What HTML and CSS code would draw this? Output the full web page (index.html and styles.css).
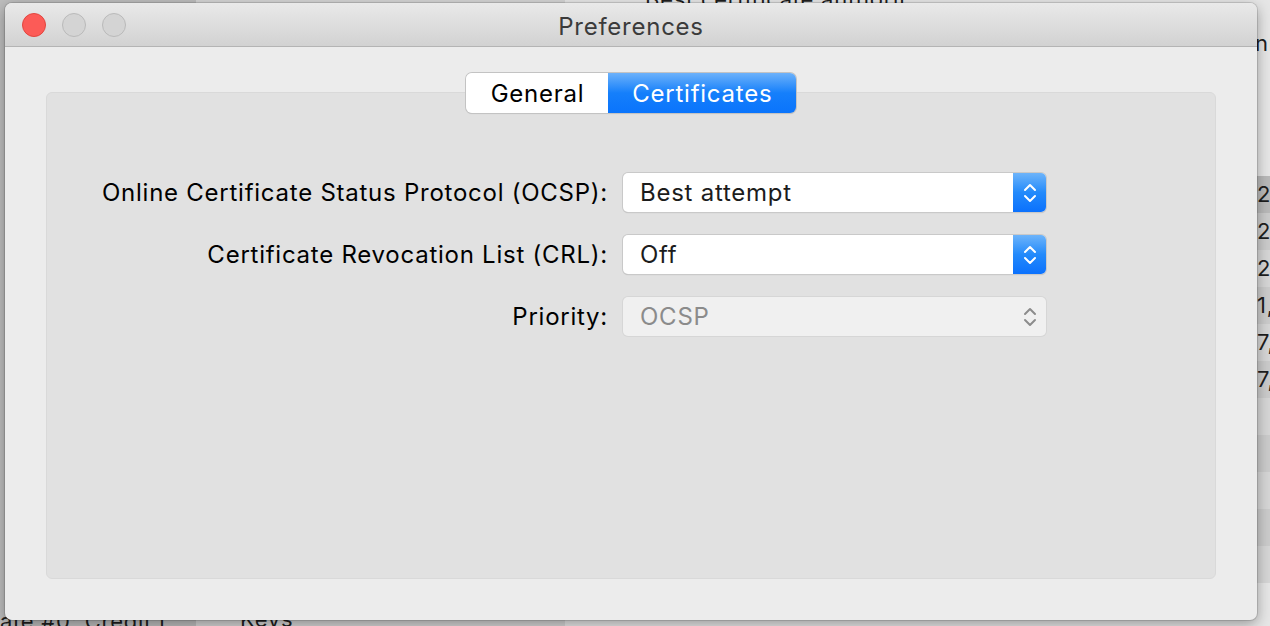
FILE: index.html
```html
<!DOCTYPE html>
<html lang="en">
<head>
    <meta charset="UTF-8">
    <title>Preferences</title>
    <link rel="stylesheet" href="styles.css">
</head>
<body>
<div class="desk">
    <span class="frag frag-top">Best certificate authorit</span>
    <span class="frag frag-nr">nr</span>
    <ul class="frag-rows">
        <li class="dark">2</li>
        <li>2</li>
        <li>2</li>
        <li>1,</li>
        <li>7,</li>
        <li>7,</li>
        <li></li>
        <li></li>
        <li></li>
        <li></li>
        <li></li>
    </ul>
    <span class="frag frag-bottom">ate #0: Credit t</span>
    <span class="frag frag-keys">Keys</span>
</div>

<div class="window">
    <div class="titlebar">
        <div class="lights">
            <span class="light close"></span>
            <span class="light"></span>
            <span class="light"></span>
        </div>
        <div class="title">Preferences</div>
    </div>

    <div class="content">
        <div class="tabs">
            <span class="tab">General</span>
            <span class="tab active">Certificates</span>
        </div>

        <div class="group">
            <div class="form">
                <label class="label">Online Certificate Status Protocol (OCSP):</label>
                <div class="popup">
                    <span class="value">Best attempt</span>
                    <span class="stepper">
                        <svg width="14" height="22" viewBox="0 0 14 22"><path d="M2 8 L7 3 L12 8 M2 14 L7 19 L12 14" fill="none" stroke="#fff" stroke-width="2" stroke-linecap="round" stroke-linejoin="round"/></svg>
                    </span>
                </div>

                <label class="label">Certificate Revocation List (CRL):</label>
                <div class="popup">
                    <span class="value">Off</span>
                    <span class="stepper">
                        <svg width="14" height="22" viewBox="0 0 14 22"><path d="M2 8 L7 3 L12 8 M2 14 L7 19 L12 14" fill="none" stroke="#fff" stroke-width="2" stroke-linecap="round" stroke-linejoin="round"/></svg>
                    </span>
                </div>

                <label class="label">Priority:</label>
                <div class="popup disabled">
                    <span class="value">OCSP</span>
                    <span class="stepper">
                        <svg width="14" height="22" viewBox="0 0 14 22"><path d="M2 8 L7 3 L12 8 M2 14 L7 19 L12 14" fill="none" stroke="#8c8c8c" stroke-width="2" stroke-linecap="round" stroke-linejoin="round"/></svg>
                    </span>
                </div>
            </div>
        </div>
    </div>
</div>
</body>
</html>
```

FILE: styles.css
```css
* {
    margin: 0;
    padding: 0;
    box-sizing: border-box;
    list-style: none;
}

html, body {
    width: 1270px;
    height: 626px;
    overflow: hidden;
}

body {
    position: relative;
    background: #c9c9c9;
    font-family: Inter, "Liberation Sans", Arial, sans-serif;
    letter-spacing: 0.75px;
    padding: 3px 13px 6px 5px;
}

/* app behind the window */
.desk {
    position: absolute;
    top: 0;
    left: 0;
    width: 1270px;
    height: 626px;
    background: linear-gradient(to right, #bdbdbd 0, #bdbdbd 196px, #d4d4d4 196px, #d4d4d4 565px, #e6e6e6 565px);
}

.frag {
    position: absolute;
    font-size: 22px;
    color: #1e1e1e;
}

.frag-top {
    left: 645px;
    top: -14px;
}

.frag-nr {
    left: 1255px;
    top: 30px;
}

.frag-rows {
    position: absolute;
    left: 1250px;
    top: 176px;
    width: 20px;
}

.frag-rows li {
    height: 37px;
    line-height: 37px;
    font-size: 22px;
    color: #1e1e1e;
    padding-left: 7px;
    background: #d6d6d6;
}

.frag-rows li:nth-child(even) {
    background: #cbcbcb;
}

.frag-rows li.dark {
    background: #b9b9b9;
}

.frag-bottom {
    left: 0;
    top: 608px;
}

.frag-keys {
    left: 240px;
    top: 606px;
}

/* window */
.window {
    position: relative;
    height: 617px;
    display: flex;
    flex-direction: column;
    background: #ececec;
    border-radius: 7px;
    overflow: hidden;
    box-shadow: 0 0 0 1px rgba(0, 0, 0, 0.12), 0 4px 14px rgba(0, 0, 0, 0.35);
}

.titlebar {
    height: 44px;
    flex: none;
    display: flex;
    align-items: center;
    position: relative;
    background: linear-gradient(#e9e9e9, #d2d2d2);
    border-bottom: 1px solid #b4b4b4;
}

.lights {
    display: flex;
    gap: 16px;
    padding-left: 17px;
    position: relative;
    z-index: 1;
}

.light {
    width: 24px;
    height: 24px;
    border-radius: 50%;
    background: #d4d4d4;
    border: 1px solid #bababa;
}

.light.close {
    background: #fc5b57;
    border-color: #e2463f;
}

.title {
    position: absolute;
    left: 0;
    right: 0;
    top: 9px;
    text-align: center;
    font-size: 24px;
    line-height: 30px;
    color: #3b3b3b;
}

.content {
    flex: 1;
    display: flex;
    flex-direction: column;
    align-items: center;
    padding: 26px 41px 41px;
}

.tabs {
    display: flex;
    height: 40px;
    margin-bottom: -21px;
    position: relative;
    z-index: 1;
    border-radius: 6px;
    box-shadow: 0 0 0 1px #c3c3c3, 0 1px 1px rgba(0, 0, 0, 0.15);
}

.tab {
    display: flex;
    align-items: center;
    padding: 0 24px 0 25px;
    font-size: 24px;
    color: #000;
    background: #fff;
    border-radius: 6px 0 0 6px;
}

.tab.active {
    padding: 0 24px;
    color: #fff;
    background: linear-gradient(#6cb1fa, #157ffb 50%, #0a74fc);
    border-radius: 0 6px 6px 0;
}

.group {
    flex: 1;
    align-self: stretch;
    background: #e1e1e1;
    border: 1px solid #d9d9d9;
    border-radius: 6px;
    padding-top: 80px;
}

.form {
    display: grid;
    grid-template-columns: 561px 423px;
    column-gap: 15px;
    row-gap: 23px;
    align-items: center;
}

.label {
    text-align: right;
    font-size: 24px;
    color: #000;
}

.popup {
    height: 39px;
    display: flex;
    align-items: stretch;
    background: #fff;
    border-radius: 5px;
    box-shadow: 0 0 0 1px #c9c9c9, 0 1px 1px rgba(0, 0, 0, 0.2);
    overflow: hidden;
}

.value {
    flex: 1;
    display: flex;
    align-items: center;
    padding-left: 17px;
    font-size: 24px;
    color: #1c1c1c;
}

.stepper {
    width: 33px;
    display: flex;
    align-items: center;
    justify-content: center;
    background: linear-gradient(#6db4fa, #238afb 50%, #0b71fd);
}

.popup.disabled {
    background: #f0f0f0;
    box-shadow: 0 0 0 1px #d6d6d6;
}

.popup.disabled .value {
    color: #8b8b8b;
}

.popup.disabled .stepper {
    background: none;
}
```
